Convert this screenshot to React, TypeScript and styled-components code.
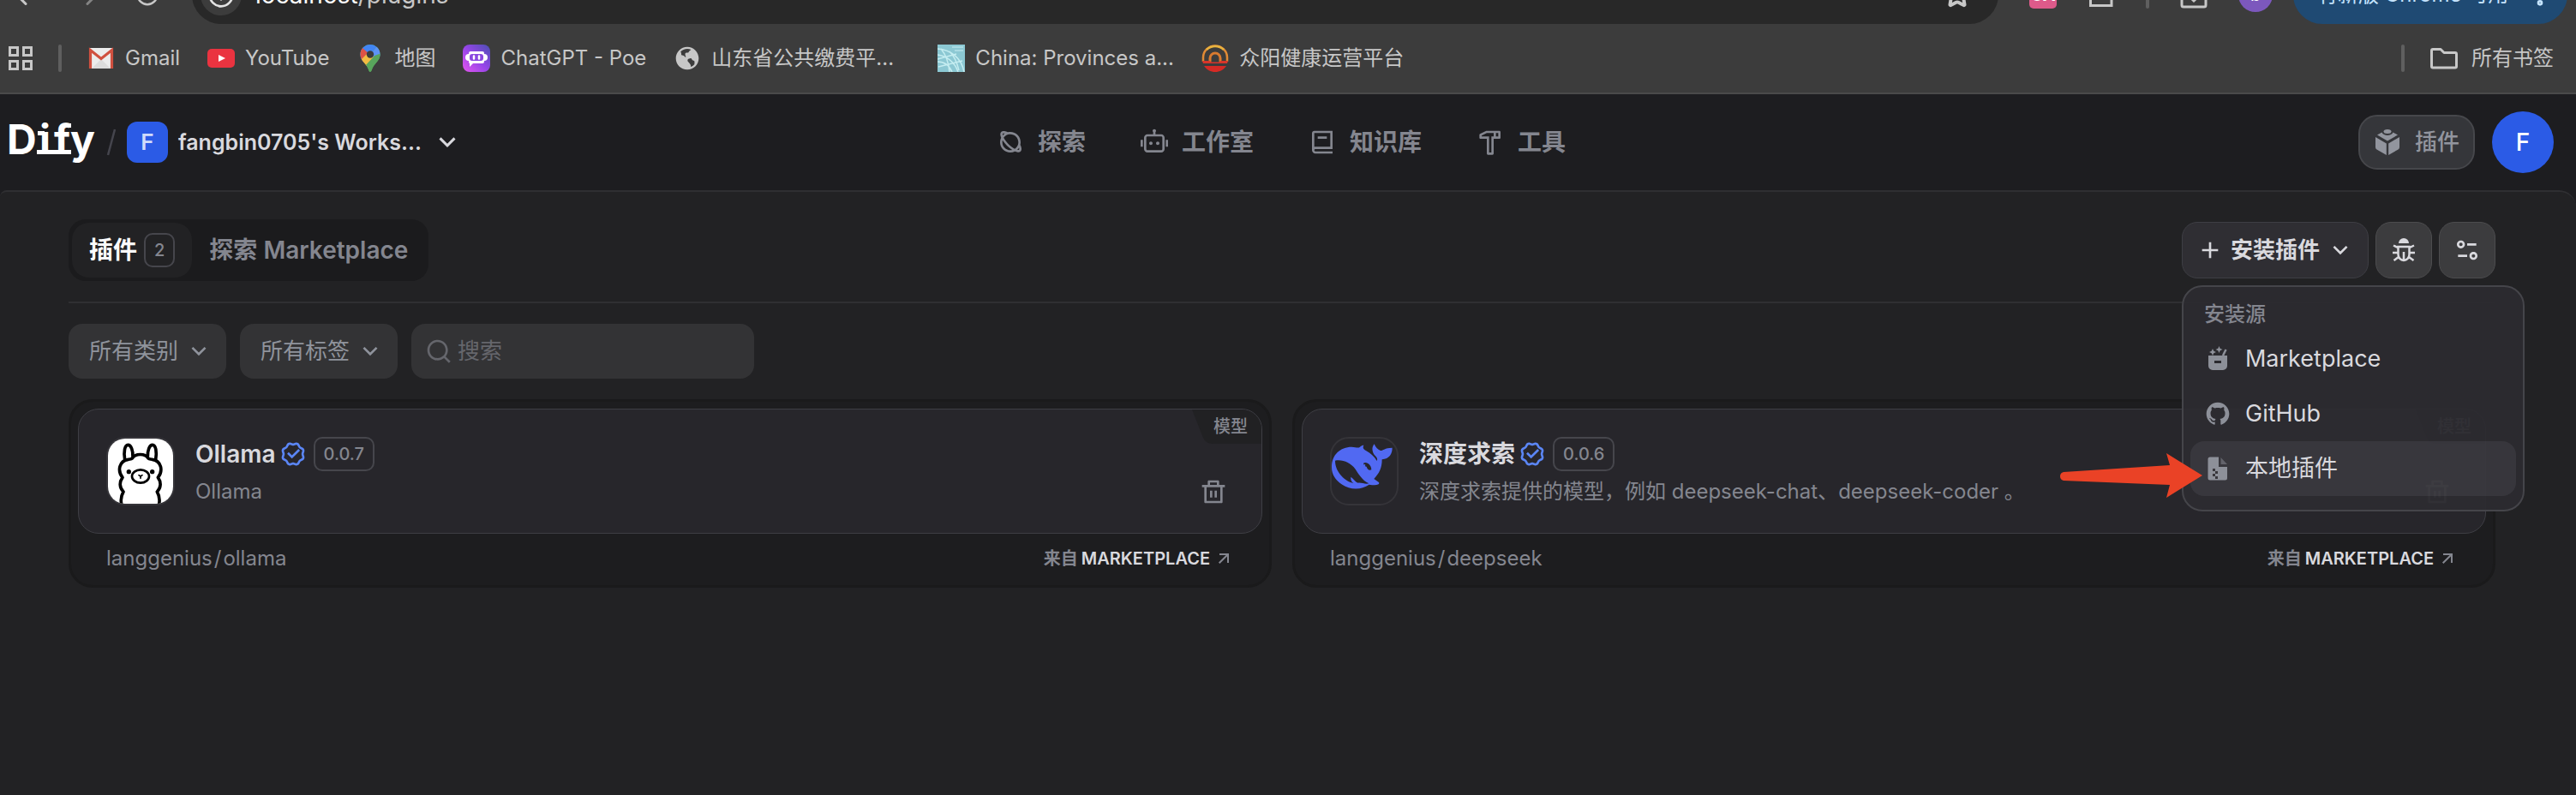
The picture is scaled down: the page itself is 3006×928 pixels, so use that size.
import React from "react";
import styled, { createGlobalStyle } from "styled-components";
import { ArrowLeft, ArrowRight, RotateCw, Star, Info, EllipsisVertical } from "lucide-react";
import {
  RiAddLine,
  RiArrowDownSLine,
  RiArrowRightUpLine,
  RiBook2Line,
  RiDeleteBinLine,
  RiEarthFill,
  RiEqualizer2Line,
  RiGithubFill,
  RiHammerLine,
  RiPlanetLine,
  RiRobot2Line,
  RiSearchLine,
  RiVerifiedBadgeLine,
} from "react-icons/ri";

const color = {
  chrome: "#3c3c3c",
  chromeText: "#c7c7c7",
  header: "#1d1d20",
  panel: "#222224",
  line: "#2f2f32",
  primary: "#fbfbfc",
  secondary: "#d9d9de",
  tertiary: "#84868f",
  quaternary: "#65666c",
  blue: "#2b5be6",
};

const GlobalStyle = createGlobalStyle`
  *, *::before, *::after { box-sizing: border-box; }
  body {
    margin: 0;
    background: ${color.header};
    color: ${color.secondary};
    font-family: Inter, "Noto Sans CJK SC", sans-serif;
    font-size: 24px;
    line-height: 32px;
  }
  button, input, select { font: inherit; color: inherit; margin: 0; padding: 0; border: 0; background: none; }
  a { color: inherit; text-decoration: none; }
  ul { list-style: none; margin: 0; padding: 0; }
  h3, p { margin: 0; }
  svg { display: block; flex-shrink: 0; }
`;

const Page = styled.div`
  display: flex;
  flex-direction: column;
  min-height: 100vh;
`;

/* Browser chrome */

const Chrome = styled.div`
  background: ${color.chrome};
  border-bottom: 2px solid #4a4a4a;
  color: ${color.chromeText};
`;

const AddressRowClip = styled.div`
  height: 28px;
  overflow: hidden;
  display: flex;
  align-items: flex-end;
`;

const AddressRow = styled.div`
  flex: 1;
  height: 68px;
  padding: 0 10px 0 12px;
  display: flex;
  align-items: center;
  gap: 36px;
`;

const ChromeButton = styled.button<{ $dim?: boolean }>`
  display: grid;
  place-items: center;
  min-width: 32px;
  color: ${(p) => (p.$dim ? "#838383" : color.chromeText)};
`;

const AddressBar = styled.div`
  flex: 1;
  height: 68px;
  padding: 0 32px 0 10px;
  border-radius: 34px;
  background: #282828;
  display: flex;
  align-items: center;
  gap: 16px;
  font-size: 28px;
`;

const SiteInfo = styled.span`
  width: 48px;
  height: 48px;
  border-radius: 50%;
  background: #3c3c3c;
  color: #e3e3e3;
  display: grid;
  place-items: center;
`;

const Address = styled.span`
  flex: 1;
  color: #c7c7c7;
  b { font-weight: 400; color: #fff; }
`;

const ChromeDivider = styled.span`
  width: 4px;
  height: 32px;
  border-radius: 2px;
  background: #5f5f5f;
`;

const Translate = styled.span`
  width: 32px;
  height: 32px;
  border-radius: 5px;
  background: #dd5a8a;
  color: #fff;
  font-size: 20px;
  font-weight: 700;
  text-align: center;
`;

const ProfileGroup = styled.div`
  display: flex;
  align-items: center;
  gap: 24px;
`;

const Profile = styled.span`
  width: 40px;
  height: 40px;
  border-radius: 50%;
  background: #7c58bd;
  color: #fff;
  font-size: 20px;
  line-height: 40px;
  text-align: center;
`;

const UpdateButton = styled.button`
  min-width: 320px;
  height: 68px;
  padding: 0 16px 0 28px;
  border-radius: 34px;
  background: #1f4a73;
  color: #c5e4ff;
  display: flex;
  align-items: center;
  justify-content: space-between;
`;

const BookmarkBar = styled.nav`
  height: 80px;
  padding: 0 26px 0 10px;
  display: flex;
  align-items: center;
  gap: 30px;
`;

const Bookmarks = styled.div`
  flex: 1;
  display: flex;
  gap: 32px;
`;

const Bookmark = styled.a<{ $wide?: boolean }>`
  display: flex;
  align-items: center;
  gap: 12px;
  white-space: nowrap;
  span { min-width: ${(p) => (p.$wide ? "232px" : "0")}; }
`;

const AllBookmarks = styled(Bookmark)`
  gap: 16px;
`;

/* App header */

const Header = styled.header`
  height: 112px;
  padding: 0 26px 0 10px;
  display: grid;
  grid-template-columns: 1fr auto 1fr;
  align-items: center;
`;

const HeaderSide = styled.div<{ $end?: boolean }>`
  display: flex;
  align-items: center;
  justify-content: ${(p) => (p.$end ? "flex-end" : "flex-start")};
  gap: ${(p) => (p.$end ? "20px" : "12px")};
`;

const Workspace = styled.button`
  display: flex;
  align-items: center;
  gap: 12px;
  font-size: 25px;
  font-weight: 600;
  color: ${color.secondary};
`;

const WorkspaceBadge = styled.span`
  width: 48px;
  height: 48px;
  border-radius: 12px;
  background: ${color.blue};
  color: #d0dbfa;
  font-size: 26px;
  line-height: 48px;
`;

const MainNav = styled.nav`
  display: flex;
  gap: 64px;
`;

const NavLink = styled.a`
  display: flex;
  align-items: center;
  gap: 16px;
  font-size: 28px;
  font-weight: 600;
  color: ${color.tertiary};
`;

const PluginLink = styled.a`
  height: 64px;
  padding: 0 16px;
  border: 2px solid #46474b;
  border-radius: 22px;
  background: #35363a;
  color: #92959e;
  display: flex;
  align-items: center;
  gap: 16px;
  font-size: 26px;
  font-weight: 500;
`;

const Avatar = styled.button`
  width: 72px;
  height: 72px;
  border-radius: 50%;
  background: ${color.blue};
  color: #fff;
  font-size: 28px;
  font-weight: 500;
`;

/* Content */

const Panel = styled.main`
  flex: 1;
  padding: 32px 94px 0 80px;
  border-top: 2px solid ${color.line};
  border-radius: 8px 20px 0 0;
  background: ${color.panel};
`;

const Toolbar = styled.div`
  padding-bottom: 24px;
  border-bottom: 2px solid ${color.line};
  display: flex;
  align-items: center;
  justify-content: space-between;
`;

const Tabs = styled.div`
  height: 72px;
  padding: 4px;
  border-radius: 20px;
  background: #1b1b1d;
  display: flex;
`;

const Tab = styled.button<{ $active?: boolean }>`
  padding: 0 20px;
  border-radius: 20px;
  display: flex;
  align-items: center;
  gap: 8px;
  font-size: 28px;
  font-weight: ${(p) => (p.$active ? 700 : 600)};
  color: ${(p) => (p.$active ? color.primary : color.tertiary)};
  background: ${(p) => (p.$active ? color.panel : "transparent")};
`;

const Tag = styled.span`
  height: 40px;
  padding: 0 10px;
  border: 2px solid #46464c;
  border-radius: 10px;
  font-size: 20px;
  line-height: 36px;
  font-weight: 500;
  color: ${color.tertiary};
`;

const Actions = styled.div`
  display: flex;
  gap: 8px;
`;

const InstallWrap = styled.div`
  position: relative;
`;

const InstallButton = styled.button`
  height: 66px;
  padding: 0 16px;
  border: 1px solid #3e3e44;
  border-radius: 18px;
  background: #2f2e33;
  display: flex;
  align-items: center;
  gap: 8px;
  font-size: 26px;
  font-weight: 600;
`;

const IconButton = styled.button`
  width: 66px;
  height: 66px;
  border: 1px solid #4c4c4e;
  border-radius: 18px;
  background: #3c3c3e;
  display: grid;
  place-items: center;
`;

const Menu = styled.div`
  position: absolute;
  z-index: 2;
  top: calc(100% + 8px);
  left: 0;
  width: 400px;
  padding: 8px 8px 16px;
  border: 2px solid #45454a;
  border-radius: 24px;
  background: rgba(44, 43, 48, 0.95);
`;

const MenuTitle = styled.div`
  padding: 8px 16px 4px;
  font-weight: 500;
  color: ${color.tertiary};
`;

const MenuItem = styled.li`
  position: relative;
`;

const MenuButton = styled.button<{ $hover?: boolean }>`
  width: 100%;
  height: 64px;
  padding: 0 16px;
  border-radius: 16px;
  background: ${(p) => (p.$hover ? "rgba(200, 206, 218, 0.08)" : "transparent")};
  display: flex;
  align-items: center;
  gap: 16px;
  font-size: 27px;
  svg { color: #8d9099; }
`;

const Pointer = styled.svg`
  position: absolute;
  top: 14px;
  right: calc(100% - 14px);
`;

const Filters = styled.div`
  padding: 24px 0;
  display: flex;
  gap: 16px;
`;

const SelectBox = styled.label`
  position: relative;
  color: #8f939c;
  svg {
    position: absolute;
    top: 16px;
    right: 16px;
    pointer-events: none;
  }
`;

const Select = styled.select`
  appearance: none;
  width: 184px;
  height: 64px;
  padding: 0 24px;
  border-radius: 16px;
  background: #333335;
  font-size: 26px;
`;

const SearchBox = styled.label`
  width: 400px;
  height: 64px;
  padding: 0 16px;
  border-radius: 16px;
  background: #333335;
  color: ${color.quaternary};
  display: flex;
  align-items: center;
  gap: 6px;
  font-size: 26px;
`;

const SearchInput = styled.input`
  flex: 1;
  min-width: 0;
  outline: none;
  color: ${color.secondary};
  &::placeholder { color: ${color.quaternary}; opacity: 1; }
`;

const CardGrid = styled.div`
  display: grid;
  grid-template-columns: 1fr 1fr;
  gap: 24px;
`;

const Card = styled.article`
  padding: 8px;
  border: 3px solid #1a1a1b;
  border-radius: 28px;
  background: #1d1d1f;
`;

const CardBody = styled.div`
  position: relative;
  overflow: hidden;
  padding: 32px;
  border: 1px solid #3e3e44;
  border-radius: 24px;
  background: #27262b;
  display: flex;
  gap: 24px;
`;

const PluginIcon = styled.div`
  width: 80px;
  height: 80px;
  border: 2px solid #353439;
  border-radius: 22px;
  overflow: hidden;
`;

const CardText = styled.div`
  flex: 1;
  min-width: 0;
`;

const CardTitle = styled.div`
  height: 40px;
  display: flex;
  align-items: center;
  gap: 8px;
`;

const CardName = styled.h3`
  display: flex;
  align-items: center;
  gap: 4px;
  font-size: 28px;
  font-weight: 600;
  svg { color: #5b86f5; }
`;

const CardLine = styled.div`
  margin-top: 8px;
  display: flex;
  align-items: center;
  justify-content: space-between;
  color: ${color.tertiary};
`;

const DeleteButton = styled.button`
  padding: 0 8px;
`;

const Corner = styled.div`
  position: absolute;
  top: 0;
  right: 0;
  height: 40px;
  display: flex;
  color: #212123;
  span {
    padding-right: 16px;
    background: #212123;
    color: ${color.tertiary};
    font-size: 20px;
    line-height: 40px;
    font-weight: 500;
  }
`;

const CardFooter = styled.div`
  height: 52px;
  padding: 6px 33px 0;
  display: flex;
  align-items: center;
  justify-content: space-between;
  color: ${color.tertiary};
`;

const PluginPath = styled.div`
  display: flex;
  gap: 2px;
`;

const Source = styled.a`
  display: flex;
  align-items: center;
  gap: 4px;
  font-size: 20px;
  font-weight: 600;
  b { font-weight: 600; color: ${color.secondary}; }
`;

/* Drawings */

const AppsIcon = () => (
  <svg width="28" height="28" viewBox="0 0 28 28" fill="none" stroke="currentColor" strokeWidth="3">
    <path d="M1.500 1.500h9v9h-9zM17.500 1.500h9v9h-9zM1.500 17.500h9v9h-9zM17.500 17.500h9v9h-9z" />
  </svg>
);

const GmailIcon = () => (
  <svg width="32" height="32" viewBox="0 0 32 32">
    <rect x="2" y="4" width="28" height="24" rx="1" fill="#ececec" />
    <path d="M5 28 16 17l11 11z" fill="#dcdcdc" />
    <path d="M3.500 28V6.500L16 16.500l12.500-10V28" fill="none" stroke="#d0503f" strokeWidth="3.200" />
  </svg>
);

const YouTubeIcon = () => (
  <svg width="32" height="32" viewBox="0 0 32 32">
    <rect y="5" width="32" height="22" rx="5" fill="#ea3340" />
    <path d="M13 12v8l8-4z" fill="#fff" />
  </svg>
);

const MapIcon = () => (
  <svg width="32" height="32" viewBox="0 0 32 32">
    <defs>
      <clipPath id="pin">
        <path d="M16 0a11.500 11.500 0 0 1 11.500 11.500c0 8-7.500 10.500-9.800 18.500-.6 2.600-2.800 2.600-3.400 0C12 22 4.500 19.500 4.500 11.500A11.500 11.500 0 0 1 16 0z" />
      </clipPath>
    </defs>
    <g clipPath="url(#pin)">
      <path d="M0 0h32v32H0z" fill="#58a55c" />
      <path d="M0 0h20l4 2-8 10L6 24H0z" fill="#4285f4" />
      <path d="M0 4h7l9 8L6 24H0z" fill="#de5246" />
      <path d="M3 20 14 9l8 5L10 27z" fill="#f2bb42" />
      <path d="M16 12 24 2l8 10-10 4z" fill="#5d93f5" />
      <path d="M21 13l8-3v14L15 32l-5-7z" fill="#58a55c" />
    </g>
    <circle cx="16" cy="11.500" r="4.200" fill="#3c3c3c" />
  </svg>
);

const PoeIcon = () => (
  <svg width="32" height="32" viewBox="0 0 32 32">
    <defs>
      <linearGradient id="poe" x1="0" y1="1" x2="1" y2="0">
        <stop offset="0" stopColor="#e355ee" />
        <stop offset="0.500" stopColor="#9545e8" />
        <stop offset="1" stopColor="#4a4fb0" />
      </linearGradient>
    </defs>
    <rect width="32" height="32" rx="8" fill="url(#poe)" />
    <path d="M9 8h14a2 2 0 0 1 2 2v1a2.500 2.500 0 0 1 0 8v1a2 2 0 0 1-2 2H12l-4 4v-4a2 2 0 0 1-1-2v-1a2.500 2.500 0 0 1 0-8v-1a2 2 0 0 1 2-2z" fill="#fff" />
    <rect x="8" y="11" width="16" height="8" rx="3" fill="#8a48e0" />
    <path d="M13 13.500v3M19 13.500v3" stroke="#fff" strokeWidth="2.500" strokeLinecap="round" />
  </svg>
);

const AtlasIcon = () => (
  <svg width="32" height="32" viewBox="0 0 32 32" fill="none">
    <path d="M0 0h32v32H0z" fill="#8cc8d3" />
    <path d="M0 5C16 6 28 16 31 32M0 12c10 1 20 8 24 20M0 20c8 0 14 5 17 12M4 5c6 7 9 16 10 27M14 8c6 6 9 14 11 22M1 26l28-7M0 17l22-6" stroke="#c5edf1" strokeWidth="1.500" />
    <path d="M17 3h13M20 7h10" stroke="#aadbe3" strokeWidth="2" />
  </svg>
);

const HealthIcon = () => (
  <svg width="32" height="32" viewBox="0 0 32 32" fill="none">
    <path d="M2 20V15a14 13.500 0 0 1 28 0v5" stroke="#e08a35" strokeWidth="2.500" />
    <path d="M6 6A14 13 0 0 1 26 6" stroke="#e8b33f" strokeWidth="2.500" />
    <path d="M10 20v-4a6 6 0 0 1 12 0v4" stroke="#d97a2f" strokeWidth="3" />
    <path d="M1 19h8l3 1.500h8l3-1.500h8l-1 3H2z" fill="#d8352a" />
    <path d="M3 25h26c-3 4.500-8 7-13 7s-10-2.500-13-7z" fill="#d62a25" />
  </svg>
);

const FolderOutline = () => (
  <svg width="32" height="32" viewBox="0 0 32 32" fill="none" stroke="currentColor" strokeWidth="3" strokeLinejoin="round">
    <path d="M1.500 7A1.500 1.500 0 0 1 3 5.500h9l4 4h13a1.500 1.500 0 0 1 1.500 1.500v14.500a1.500 1.500 0 0 1-1.500 1.500H3a1.500 1.500 0 0 1-1.500-1.500z" />
  </svg>
);

const TrayIcon = () => (
  <svg width="32" height="32" viewBox="0 0 32 32" fill="none" stroke="currentColor" strokeWidth="3">
    <path d="M16 2v20M11 18l5 5 5-5M2 14v14a2 2 0 0 0 2 2h24a2 2 0 0 0 2-2V14" />
  </svg>
);

const ExtensionIcon = () => (
  <svg width="32" height="32" viewBox="0 0 32 32" fill="none" stroke="currentColor" strokeWidth="3">
    <path d="M4 8h7a5 4 0 0 1 10 0h7v20.500H3.500V8z" />
  </svg>
);

const DifyLogo = () => (
  <svg width="102" height="60" viewBox="0 0 102 60" fill="#fff" role="img" aria-label="Dify">
    <text x="-2 36 53 72" y="44" fontFamily="Inter, sans-serif" fontSize="48" fontWeight="650">Dify</text>
    <path d="M33 39h40v5H33zM34 17h8v5h-8zM64 8h9v5h-9z" />
  </svg>
);

const SlashIcon = () => (
  <svg width="12" height="32" viewBox="0 0 12 32" stroke="#45454d" strokeWidth="2.500">
    <path d="M10 1 2 31" />
  </svg>
);

const CubeIcon = () => (
  <svg width="32" height="32" viewBox="-2 -1 32 32" fill="currentColor">
    <ellipse cx="14" cy="2.500" rx="4.500" ry="2.500" />
    <path d="M2 6.500 7.500 3.500C9 8 19 8 20.500 3.500L26 6.500 14 13.500z" />
    <path d="M0 9l12.800 7.500V30L1.500 23.500A3 3 0 0 1 0 21zM28 9l-12.800 7.500V30l11.300-6.500A3 3 0 0 0 28 21z" />
  </svg>
);

const BugIcon = () => (
  <svg width="32" height="32" viewBox="-2 -2 32 32" fill="none" stroke="currentColor" strokeWidth="2.500">
    <path d="M8 6a6 6 0 0 1 12 0z" fill="currentColor" stroke="none" />
    <path d="M7.500 10h13v9a6.500 7 0 0 1-13 0zM14 16v10M1 17h6M21 17h6M2 8.500l6 3M26 8.500l-6 3M2.500 26l5.500-4M25.500 26 20 22" />
  </svg>
);

const MarketIcon = () => (
  <svg width="32" height="32" viewBox="0 0 32 32" fill="currentColor">
    <path d="M5 12h22v12a5 5 0 0 1-5 5H10a5 5 0 0 1-5-5zM12 18v3h8v-3z" fillRule="evenodd" />
    <path d="M10 4l1.300 2.700L14 8l-2.700 1.300L10 12 8.700 9.300 6 8l2.700-1.300zM17.500 1l1.200 2.800 2.800 1.200-2.800 1.200-1.200 2.800-1.200-2.800L13.500 5l2.800-1.200z" />
    <path d="m22 12 3.500-7" stroke="currentColor" strokeWidth="2.500" />
  </svg>
);

const PackageIcon = () => (
  <svg width="32" height="32" viewBox="0 0 32 32" fill="currentColor">
    <path d="M7 2.500h10V14h10v13a2.500 2.500 0 0 1-2.500 2.500H7A2.500 2.500 0 0 1 4.500 27V5A2.500 2.500 0 0 1 7 2.500z" />
    <path d="M19.500 3v8H27z" opacity="0.500" />
    <path d="M10 16h3v3h-3zM13 19h3v3h-3zM10 22h3v3h-3zM13 25h3v3h-3z" fill="#38373c" />
  </svg>
);

const OllamaIcon = () => (
  <svg width="76" height="76" viewBox="18 20 228 228" fill="none" stroke="#000" strokeWidth="11" strokeLinecap="round" strokeLinejoin="round">
    <path d="M18 20h228v228H18z" fill="#fff" stroke="none" />
    <path d="M66 252c-5-18-2-32 6-46-14-14-15-34-3-50-19-24-12-58 20-63 6-2 10 0 14-4 11-18 45-18 56 0 4 4 8 2 14 4 32 5 39 39 20 63 12 16 11 36-3 50 8 14 11 28 6 46" />
    <path d="M77 94C72 66 77 42 88 42s18 20 17 42M185 94c5-28 0-52-11-52s-18 20-17 42" />
    <ellipse cx="132" cy="152" rx="30" ry="23" strokeWidth="8" />
    <path d="M126 148l6 4 6-4M132 152v7" strokeWidth="5" />
    <circle cx="91" cy="136" r="8" fill="#000" stroke="none" />
    <circle cx="173" cy="136" r="8" fill="#000" stroke="none" />
  </svg>
);

const DeepSeekIcon = () => (
  <svg width="76" height="76" viewBox="28 21 228 228" fill="#5169f2">
    <path d="M28 122c-1-42 28-72 70-72 14 0 22 6 29 0 5-5 9-6 13-6-4 8-2 14 9 20 15 8 28 20 37 35 3-5 1-11-5-17-10-10-16-28-4-42 4 11 12 19 22 23 10 0 14-10 41-10 0 22-10 38-36 41 0 32-10 48-28 68l17 12c4 8-6 12-34 8-28 20-68 18-94 0-24-16-37-36-37-60z" />
    <path d="M40 98c26-5 55 8 70 29 12 18 24 40 48 51-12 4-26-4-38-2-10-4-16-15-25-21-1 9 1 16 9 22-26-6-64-36-64-79zM139 107c12-7 28 6 28 23-10 4-15-4-17-11-4 0-10-4-11-12z" fill="#27262b" />
    <circle cx="143" cy="114" r="3" />
  </svg>
);

const CornerSlope = () => (
  <svg width="25" height="40" viewBox="0 0 25 40" fill="currentColor">
    <path d="M0 0l13 33q3 7 11 7h1V0z" />
  </svg>
);

/* Data */

const bookmarks = [
  { label: "Gmail", icon: <GmailIcon /> },
  { label: "YouTube", icon: <YouTubeIcon /> },
  { label: "地图", icon: <MapIcon /> },
  { label: "ChatGPT - Poe", icon: <PoeIcon /> },
  { label: "山东省公共缴费平...", icon: <RiEarthFill size={32} />, wide: true },
  { label: "China: Provinces a...", icon: <AtlasIcon />, wide: true },
  { label: "众阳健康运营平台", icon: <HealthIcon /> },
];

const navLinks = [
  { label: "探索", Icon: RiPlanetLine },
  { label: "工作室", Icon: RiRobot2Line },
  { label: "知识库", Icon: RiBook2Line },
  { label: "工具", Icon: RiHammerLine },
];

const plugins = [
  { name: "Ollama", slug: "ollama", version: "0.0.7", text: "Ollama", icon: <OllamaIcon /> },
  {
    name: "深度求索",
    slug: "deepseek",
    version: "0.0.6",
    text: "深度求索提供的模型，例如 deepseek-chat、deepseek-coder 。",
    icon: <DeepSeekIcon />,
  },
];

function BrowserChrome() {
  return (
    <Chrome>
      <AddressRowClip>
        <AddressRow>
          <ChromeButton aria-label="后退"><ArrowLeft size={36} /></ChromeButton>
          <ChromeButton aria-label="前进" $dim><ArrowRight size={36} /></ChromeButton>
          <ChromeButton aria-label="重新加载"><RotateCw size={30} /></ChromeButton>
          <AddressBar>
            <SiteInfo><Info size={32} /></SiteInfo>
            <Address><b>localhost</b>/plugins</Address>
            <Star size={32} strokeWidth={3} />
          </AddressBar>
          <Translate>CA</Translate>
          <ExtensionIcon />
          <ChromeDivider />
          <TrayIcon />
          <ProfileGroup>
            <Profile>b</Profile>
            <UpdateButton>有新版 Chrome 可用 <EllipsisVertical size={32} strokeWidth={3} /></UpdateButton>
          </ProfileGroup>
        </AddressRow>
      </AddressRowClip>
      <BookmarkBar>
        <AppsIcon />
        <ChromeDivider />
        <Bookmarks>
          {bookmarks.map((b) => (
            <Bookmark key={b.label} href="#" $wide={b.wide}>
              {b.icon}
              <span>{b.label}</span>
            </Bookmark>
          ))}
        </Bookmarks>
        <ChromeDivider />
        <AllBookmarks href="#"><FolderOutline /><span>所有书签</span></AllBookmarks>
      </BookmarkBar>
    </Chrome>
  );
}

function AppHeader() {
  return (
    <Header>
      <HeaderSide>
        <DifyLogo />
        <SlashIcon />
        <Workspace>
          <WorkspaceBadge>F</WorkspaceBadge>
          fangbin0705's Works...
          <RiArrowDownSLine size={36} />
        </Workspace>
      </HeaderSide>
      <MainNav>
        {navLinks.map(({ label, Icon }) => (
          <NavLink key={label} href="#"><Icon size={32} />{label}</NavLink>
        ))}
      </MainNav>
      <HeaderSide $end>
        <PluginLink href="#"><CubeIcon />插件</PluginLink>
        <Avatar>F</Avatar>
      </HeaderSide>
    </Header>
  );
}

function InstallMenu() {
  return (
    <Menu>
      <MenuTitle>安装源</MenuTitle>
      <ul>
        <MenuItem><MenuButton><MarketIcon />Marketplace</MenuButton></MenuItem>
        <MenuItem><MenuButton><RiGithubFill size={32} />GitHub</MenuButton></MenuItem>
        <MenuItem>
          <MenuButton $hover><PackageIcon />本地插件</MenuButton>
          <Pointer width="166" height="52" viewBox="0 0 166 52" fill="#ea4226">
            <path d="M4 22 128 14 124 0l42 26-42 26 4-15L4 32q-4-1-4-5t4-5z" />
          </Pointer>
        </MenuItem>
      </ul>
    </Menu>
  );
}

function PluginCard({ plugin }: { plugin: (typeof plugins)[number] }) {
  return (
    <Card>
      <CardBody>
        <PluginIcon>{plugin.icon}</PluginIcon>
        <CardText>
          <CardTitle>
            <CardName>{plugin.name}<RiVerifiedBadgeLine size={32} /></CardName>
            <Tag>{plugin.version}</Tag>
          </CardTitle>
          <CardLine>
            <p>{plugin.text}</p>
            <DeleteButton aria-label="删除"><RiDeleteBinLine size={32} /></DeleteButton>
          </CardLine>
        </CardText>
        <Corner><CornerSlope /><span>模型</span></Corner>
      </CardBody>
      <CardFooter>
        <PluginPath><span>langgenius</span><span>/</span><span>{plugin.slug}</span></PluginPath>
        <Source href="#">来自 <b>MARKETPLACE</b><RiArrowRightUpLine size={24} /></Source>
      </CardFooter>
    </Card>
  );
}

export default function App() {
  return (
    <Page>
      <GlobalStyle />
      <BrowserChrome />
      <AppHeader />
      <Panel>
        <Toolbar>
          <Tabs>
            <Tab $active>插件<Tag>2</Tag></Tab>
            <Tab>探索 Marketplace</Tab>
          </Tabs>
          <Actions>
            <InstallWrap>
              <InstallButton aria-expanded="true">
                <RiAddLine size={32} />安装插件<RiArrowDownSLine size={32} />
              </InstallButton>
              <InstallMenu />
            </InstallWrap>
            <IconButton aria-label="调试"><BugIcon /></IconButton>
            <IconButton aria-label="设置"><RiEqualizer2Line size={32} /></IconButton>
          </Actions>
        </Toolbar>
        <Filters>
          <SelectBox>
            <Select aria-label="类别"><option>所有类别</option></Select>
            <RiArrowDownSLine size={32} />
          </SelectBox>
          <SelectBox>
            <Select aria-label="标签"><option>所有标签</option></Select>
            <RiArrowDownSLine size={32} />
          </SelectBox>
          <SearchBox>
            <RiSearchLine size={32} />
            <SearchInput type="text" placeholder="搜索" aria-label="搜索" />
          </SearchBox>
        </Filters>
        <CardGrid>
          {plugins.map((p) => <PluginCard key={p.slug} plugin={p} />)}
        </CardGrid>
      </Panel>
    </Page>
  );
}
